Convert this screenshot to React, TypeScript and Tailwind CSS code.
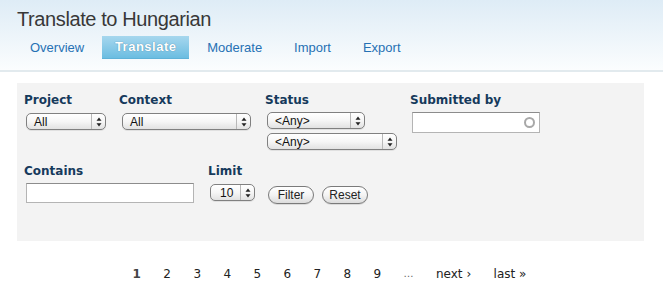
import React from "react";

const label = "font-['DejaVu_Sans',sans-serif] font-bold text-[12px] leading-[14px] text-[#163a5c]";

function Arrows() {
  return (
    <svg width="6" height="10" viewBox="0 0 6 10">
      <path d="M3 0.5 L5.5 3.8 L0.5 3.8 Z" fill="#222" />
      <path d="M3 9.5 L5.5 6.2 L0.5 6.2 Z" fill="#222" />
    </svg>
  );
}

function Select({ w, text, pl = "pl-[7px]" }: { w: string; text: string; pl?: string }) {
  return (
    <div
      className={`${w} h-[17px] flex items-stretch rounded-[5px] border border-[#808080] bg-gradient-to-b from-white via-[#f6f6f6] to-[#e2e2e2] shadow-[0_1px_0_rgba(0,0,0,0.08)]`}
    >
      <div className={`flex-1 flex items-center ${pl} text-[12px] text-[#111] font-['Liberation_Sans',sans-serif] leading-none`}>{text}</div>
      <div className="w-[14px] border-l border-[#b8b8b8] flex items-center justify-center">
        <Arrows />
      </div>
    </div>
  );
}

function Button({ text, w }: { text: string; w: string }) {
  return (
    <div
      className={`${w} h-[18px] rounded-full border border-[#7a7a7a] bg-gradient-to-b from-white via-[#f4f4f4] to-[#dcdcdc] flex items-center justify-center text-[12px] text-[#222] font-['Liberation_Sans',sans-serif] leading-none shadow-[0_1px_0_rgba(0,0,0,0.1)]`}
    >
      {text}
    </div>
  );
}

export default function App() {
  const tabs = [
    { t: "Overview", cls: "px-3" },
    { t: "Translate", cls: "px-3", active: true },
    { t: "Moderate", cls: "px-3" },
    { t: "Import", cls: "px-[14px]" },
    { t: "Export", cls: "px-3" },
  ];
  return (
    <div className="w-[663px] h-[307px] bg-white overflow-hidden">
      <div className="h-[72px] bg-gradient-to-b from-[#deecf6] to-[#fbfdfe] border-b-2 border-[#e2eaee]">
        <div className="pl-[17px] pt-[7px] text-[20px] leading-[24px] tracking-[-0.4px] text-[#383838] font-['Liberation_Sans',sans-serif]">
          Translate to Hungarian
        </div>
        <div className="flex gap-[6px] pl-[18px] mt-[5px]">
          {tabs.map((tab) =>
            tab.active ? (
              <div
                key={tab.t}
                className="h-[23px] w-[87px] flex items-center justify-center bg-gradient-to-b from-[#a6d7ee] to-[#6bbde1] border-b border-[#5fb2d8] text-white font-bold text-[13px] tracking-[0.5px] font-['Liberation_Sans',sans-serif] [text-shadow:0_0_1px_rgba(0,60,100,0.6)]"
              >
                {tab.t}
              </div>
            ) : (
              <div
                key={tab.t}
                className={`h-[23px] ${tab.cls} flex items-center text-[13px] text-[#2671b4] font-['Liberation_Sans',sans-serif]`}
              >
                {tab.t}
              </div>
            )
          )}
        </div>
      </div>

      <div className="ml-[17px] mt-[11px] w-[627px] h-[158px] bg-[#f3f3f3] pl-[7px] pt-[10px]">
        <div className="flex">
          <div className="w-[95px]">
            <div className={label}>Project</div>
            <div className="mt-[6px] ml-[2px]">
              <Select w="w-[80px]" text="All" />
            </div>
          </div>
          <div className="w-[146px]">
            <div className={label}>Context</div>
            <div className="mt-[6px] ml-[3px]">
              <Select w="w-[129px]" text="All" />
            </div>
          </div>
          <div className="w-[145px]">
            <div className={label}>Status</div>
            <div className="mt-[5px] ml-[2px] flex flex-col gap-[4px]">
              <Select w="w-[98px]" text="<Any>" />
              <Select w="w-[130px]" text="<Any>" />
            </div>
          </div>
          <div>
            <div className={label}>Submitted by</div>
            <div className="mt-[5px] ml-[2px] w-[128px] h-[21px] bg-white border border-[#b4b4b4] border-t-[#8c8c8c] flex items-center justify-end pr-[4px]">
              <div className="w-[11px] h-[11px] rounded-full border-2 border-[#a8a8a8]" />
            </div>
          </div>
        </div>

        <div className="flex mt-[14px]">
          <div className="w-[184px]">
            <div className={label}>Contains</div>
            <div className="mt-[5px] ml-[2px] w-[168px] h-[20px] bg-white border border-[#b4b4b4] border-t-[#8c8c8c]" />
          </div>
          <div className="w-[59px]">
            <div className={label}>Limit</div>
            <div className="mt-[6px] ml-[2px]">
              <Select w="w-[45px]" text="10" pl="pl-[9px]" />
            </div>
          </div>
          <div className="flex items-end gap-[8px] ml-[1px] mt-[22px]">
            <Button text="Filter" w="w-[46px]" />
            <Button text="Reset" w="w-[46px]" />
          </div>
        </div>
      </div>

      <div className="mt-[26px] pr-[4px] flex justify-center gap-[22.4px] font-['DejaVu_Sans',sans-serif] text-[12px] leading-[14px] text-[#222]">
        <span className="font-bold text-[#444]">1</span>
        {["2", "3", "4", "5", "6", "7", "8", "9"].map((n) => (
          <span key={n}>{n}</span>
        ))}
        <span className="text-[#666] text-[10px]">…</span>
        <span>next ›</span>
        <span>last »</span>
      </div>
    </div>
  );
}
